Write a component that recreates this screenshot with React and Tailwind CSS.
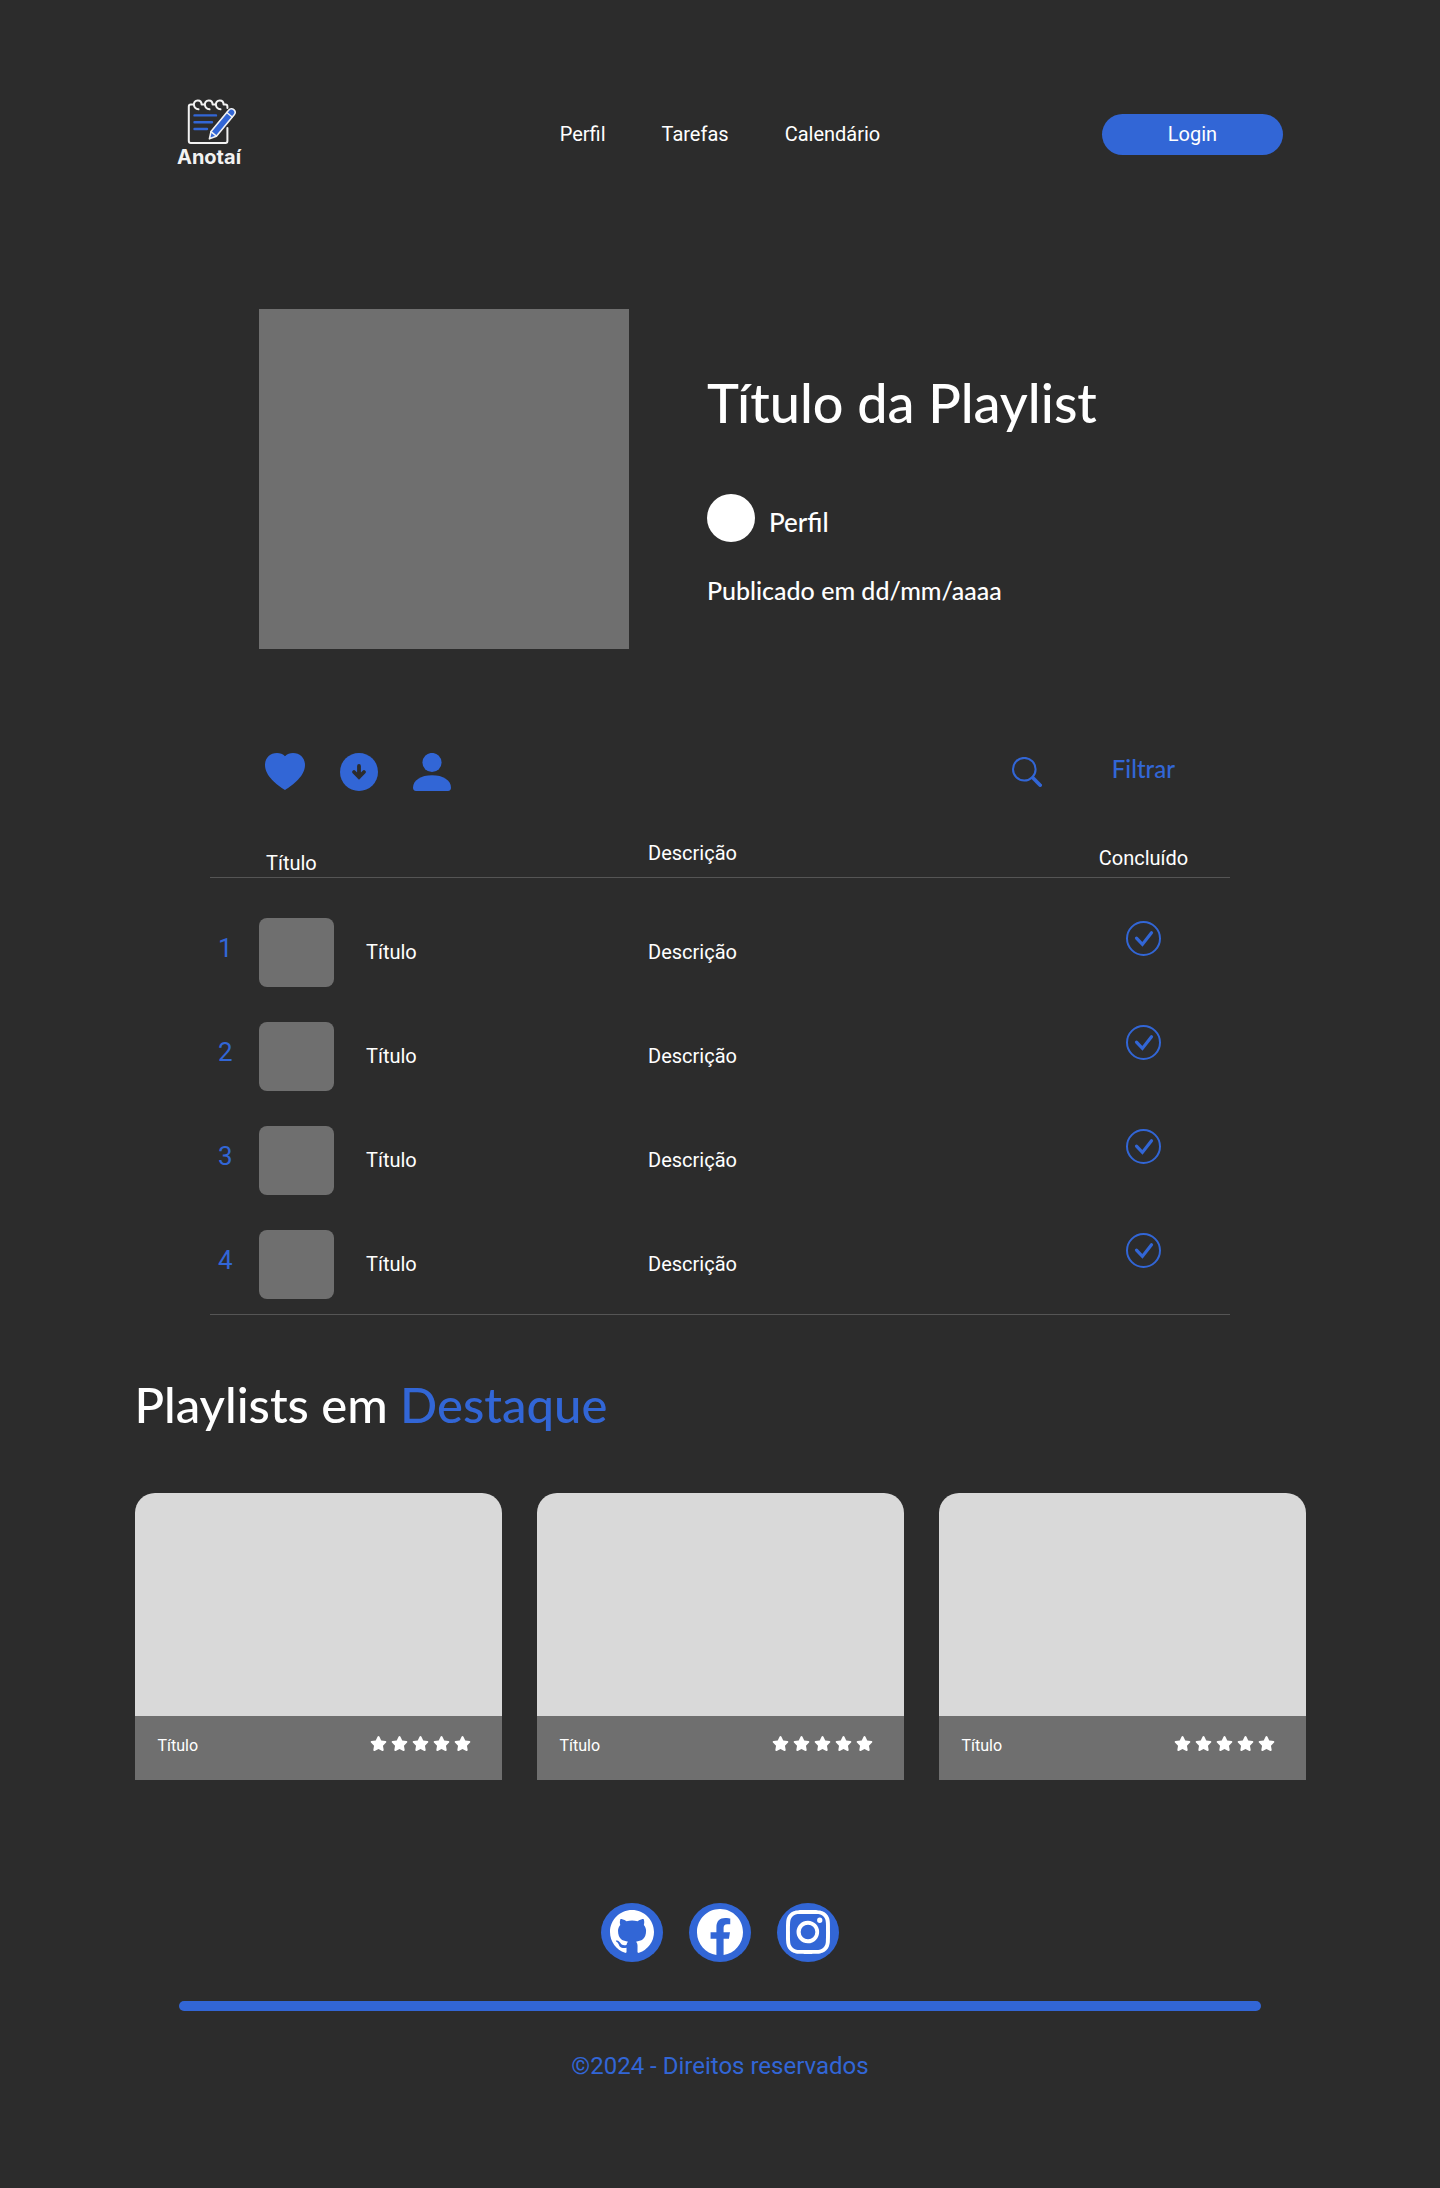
import React from "react";
import { BsGithub, BsFacebook, BsInstagram } from "react-icons/bs";
import { FaStar } from "react-icons/fa";

const tasks = [1, 2, 3, 4];
const playlists = ["a", "b", "c"];
const socials = [
  { name: "GitHub", Icon: BsGithub, size: 44 },
  { name: "Facebook", Icon: BsFacebook, size: 46 },
  { name: "Instagram", Icon: BsInstagram, size: 44 },
];

function Logo() {
  return (
    <a href="#" className="ml-5 flex w-16 flex-col items-center">
      <svg viewBox="177 99 64 46" className="h-[46px] w-16" fill="none" strokeLinecap="round" strokeLinejoin="round" aria-hidden="true">
        <g stroke="#f2f2f2" strokeWidth="2">
          <path d="M193 104.500h-2.200a2 2 0 0 0-2 2v34.600a2 2 0 0 0 2 2h34.600a2 2 0 0 0 2-2V128" />
          <path d="M198.500 109.300c-5.600-.6-6.400-8.600-.8-8.800 2.600-.1 3.800 1.700 3.900 4h2.500" />
          <path d="M209.500 109.300c-5.600-.6-6.400-8.600-.8-8.800 2.600-.1 3.800 1.700 3.900 4h2.500" />
          <path d="M220.500 109.300c-5.600-.6-6.400-8.600-.8-8.800 2.600-.1 3.800 1.700 3.900 4h1.800a2 2 0 0 1 2 2v1.500" />
        </g>
        <path d="M194.500 115.400H216M194.500 122.300h17.500M194.500 129h12.500" stroke="#3266d6" strokeWidth="2.400" />
        <path d="M209.400 138.800l1.600-7.200 17.600-21.400c1.600-1.900 3.700-1.900 5.200-.6s1.900 3.300.4 5.200l-17.800 21.400z" fill="#3266d6" stroke="#f2f2f2" strokeWidth="1.600" />
        <path d="M226.800 112.500l5.400 4.500M211 131.600l5.400 4.500" stroke="#f2f2f2" strokeWidth="1.400" />
      </svg>
      <span className="font-['Inter',sans-serif] text-xl leading-6 font-bold text-[#f2f2f2]">Anotaí</span>
    </a>
  );
}

function HeartIcon() {
  return (
    <svg viewBox="0 0 40 38" className="h-[38px] w-10" fill="currentColor" aria-hidden="true">
      <path d="M20 3.200C22 1 25 0 28 0c7 0 12 5 12 12 0 11-12 20-20 25C12 32 0 23 0 12 0 5 5 0 12 0c3 0 6 1 8 3.200z" />
    </svg>
  );
}

function DownloadIcon() {
  return (
    <svg viewBox="0 0 38 38" className="size-[38px]" aria-hidden="true">
      <circle cx="19" cy="19" r="19" fill="currentColor" />
      <path d="M19 13v11M14 19l5 5 5-5" fill="none" stroke="#2c2c2c" strokeWidth="3.800" strokeLinecap="round" />
    </svg>
  );
}

function PersonIcon() {
  return (
    <svg viewBox="0 0 38 38" className="size-[38px]" fill="currentColor" aria-hidden="true">
      <circle cx="19" cy="9.500" r="9.600" />
      <path d="M3 38c-2 0-3-1.300-3-3.200C0 27 8 22.200 19 22.200S38 27 38 34.800c0 1.900-1 3.200-3 3.200z" />
    </svg>
  );
}

function SearchIcon() {
  return (
    <svg viewBox="0 0 30 30" className="size-[30px]" fill="none" stroke="currentColor" aria-hidden="true">
      <circle cx="12.300" cy="12.200" r="11.300" strokeWidth="2" />
      <path d="M20.800 20.800l7.400 7.400" strokeWidth="3.600" strokeLinecap="round" />
    </svg>
  );
}

function DoneCheckbox({ task }) {
  return (
    <label className="relative mx-auto block size-[35px]">
      <input
        type="checkbox"
        defaultChecked
        aria-label={`Concluído ${task}`}
        className="peer block size-[35px] appearance-none rounded-full border-2 border-[#3266d6]"
      />
      <svg viewBox="0 0 35 35" className="pointer-events-none absolute inset-0 hidden size-[35px] peer-checked:block" fill="none" stroke="#3266d6" aria-hidden="true">
        <path d="M10.500 17.200l5.900 6.200 9.100-11.600" strokeWidth="3.200" strokeLinecap="round" />
      </svg>
    </label>
  );
}

export default function App() {
  return (
    <div className="min-h-screen bg-[#2c2c2c] font-['Roboto',sans-serif] text-xl leading-7 text-white">
      <header className="mx-auto grid w-full max-w-[1126px] grid-cols-[1fr_auto_1fr] items-center pt-[99px]">
        <Logo />
        <nav className="flex gap-14">
          <a href="#perfil">Perfil</a>
          <a href="#tarefas">Tarefas</a>
          <a href="#calendario">Calendário</a>
        </nav>
        <button type="button" className="h-[41px] w-[181px] justify-self-end rounded-full bg-[#3266d6]">
          Login
        </button>
      </header>

      <main>
        <section className="mx-auto mt-[140px] flex w-full max-w-[922px] gap-[78px]">
          <div className="h-[340px] w-[370px] shrink-0 bg-[#6f6f6f]" />
          <div className="pt-16 font-['Lato',sans-serif] font-medium">
            <h1 className="text-[54px] leading-[60px] whitespace-nowrap">Título da Playlist</h1>
            <div className="mt-[61px] flex items-end gap-3.5">
              <span className="size-12 rounded-full bg-white" />
              <span className="text-[26px] leading-10">Perfil</span>
            </div>
            <p className="mt-8 text-[25px] leading-8">Publicado em dd/mm/aaaa</p>
          </div>
        </section>

        <section className="mx-auto mt-[104px] flex w-full max-w-[910px] justify-between text-[#3266d6]">
          <div className="flex gap-[35px]">
            <button type="button" aria-label="Favoritar"><HeartIcon /></button>
            <button type="button" aria-label="Baixar"><DownloadIcon /></button>
            <button type="button" aria-label="Autor"><PersonIcon /></button>
          </div>
          <div className="flex items-start gap-[70px]">
            <button type="button" aria-label="Buscar" className="self-center"><SearchIcon /></button>
            <button type="button" className="font-['Lato',sans-serif] text-2xl leading-8 font-medium">Filtrar</button>
          </div>
        </section>

        <table className="mx-auto mt-12 w-full max-w-[1020px] table-fixed border-b border-[#555] text-left">
          <colgroup>
            <col className="w-[49px]" />
            <col className="w-[389px]" />
            <col />
            <col className="w-[173px]" />
          </colgroup>
          <thead>
            <tr className="h-[38px] border-b border-[#555]">
              <td />
              <th scope="col" className="pl-[7px] align-bottom font-normal">Título</th>
              <th scope="col" className="align-top font-normal">Descrição</th>
              <th scope="col" className="text-center align-middle font-normal">Concluído</th>
            </tr>
          </thead>
          <tbody>
            {tasks.map((task) => (
              <tr key={task} className="group">
                <td className="pt-[35px] pl-2 group-first:pt-10 group-last:pb-[15px]">
                  <span className="block pb-2 text-[26px] leading-9 text-[#3266d6]">{task}</span>
                </td>
                <td className="pt-[35px] group-first:pt-10 group-last:pb-[15px]">
                  <div className="flex items-center gap-8">
                    <span className="h-[69px] w-[75px] rounded-lg bg-[#6f6f6f]" />
                    <span>Título</span>
                  </div>
                </td>
                <td className="pt-[35px] group-first:pt-10 group-last:pb-[15px]">Descrição</td>
                <td className="pt-[35px] group-first:pt-10 group-last:pb-[15px]">
                  <div className="pb-7">
                    <DoneCheckbox task={task} />
                  </div>
                </td>
              </tr>
            ))}
          </tbody>
        </table>

        <section className="mx-auto mt-[59px] w-full max-w-[1171px]">
          <h2 className="font-['Lato',sans-serif] text-[49px] leading-[60px] font-medium">
            Playlists em <span className="text-[#3266d6]">Destaque</span>
          </h2>
          <div className="mt-[59px] grid grid-cols-3 gap-[35px]">
            {playlists.map((id) => (
              <article key={id} className="overflow-hidden rounded-t-[20px]">
                <div className="h-[223px] bg-[#d9d9d9]" />
                <div className="flex h-16 items-start justify-between bg-[#6f6f6f] pt-[18px] pr-[31px] pl-[23px]">
                  <h3 className="text-base leading-6">Título</h3>
                  <div className="flex gap-1 pt-0.5" role="img" aria-label="5 estrelas">
                    {[1, 2, 3, 4, 5].map((star) => (
                      <FaStar key={star} className="h-[15px] w-[17px]" />
                    ))}
                  </div>
                </div>
              </article>
            ))}
          </div>
        </section>
      </main>

      <footer className="mx-auto mt-[123px] flex w-full max-w-[1082px] flex-col items-center pb-[106px]">
        <div className="flex gap-[26px]">
          {socials.map(({ name, Icon, size }) => (
            <a key={name} href="#" aria-label={name} className="flex h-[59px] w-[62px] items-center justify-center rounded-[50%] bg-[#3266d6]">
              <Icon size={size} />
            </a>
          ))}
        </div>
        <div className="mt-[39px] h-2.5 w-full rounded-full bg-[#3266d6]" />
        <p className="mt-[39px] text-2xl leading-8 text-[#3266d6]">©2024 - Direitos reservados</p>
      </footer>
    </div>
  );
}
